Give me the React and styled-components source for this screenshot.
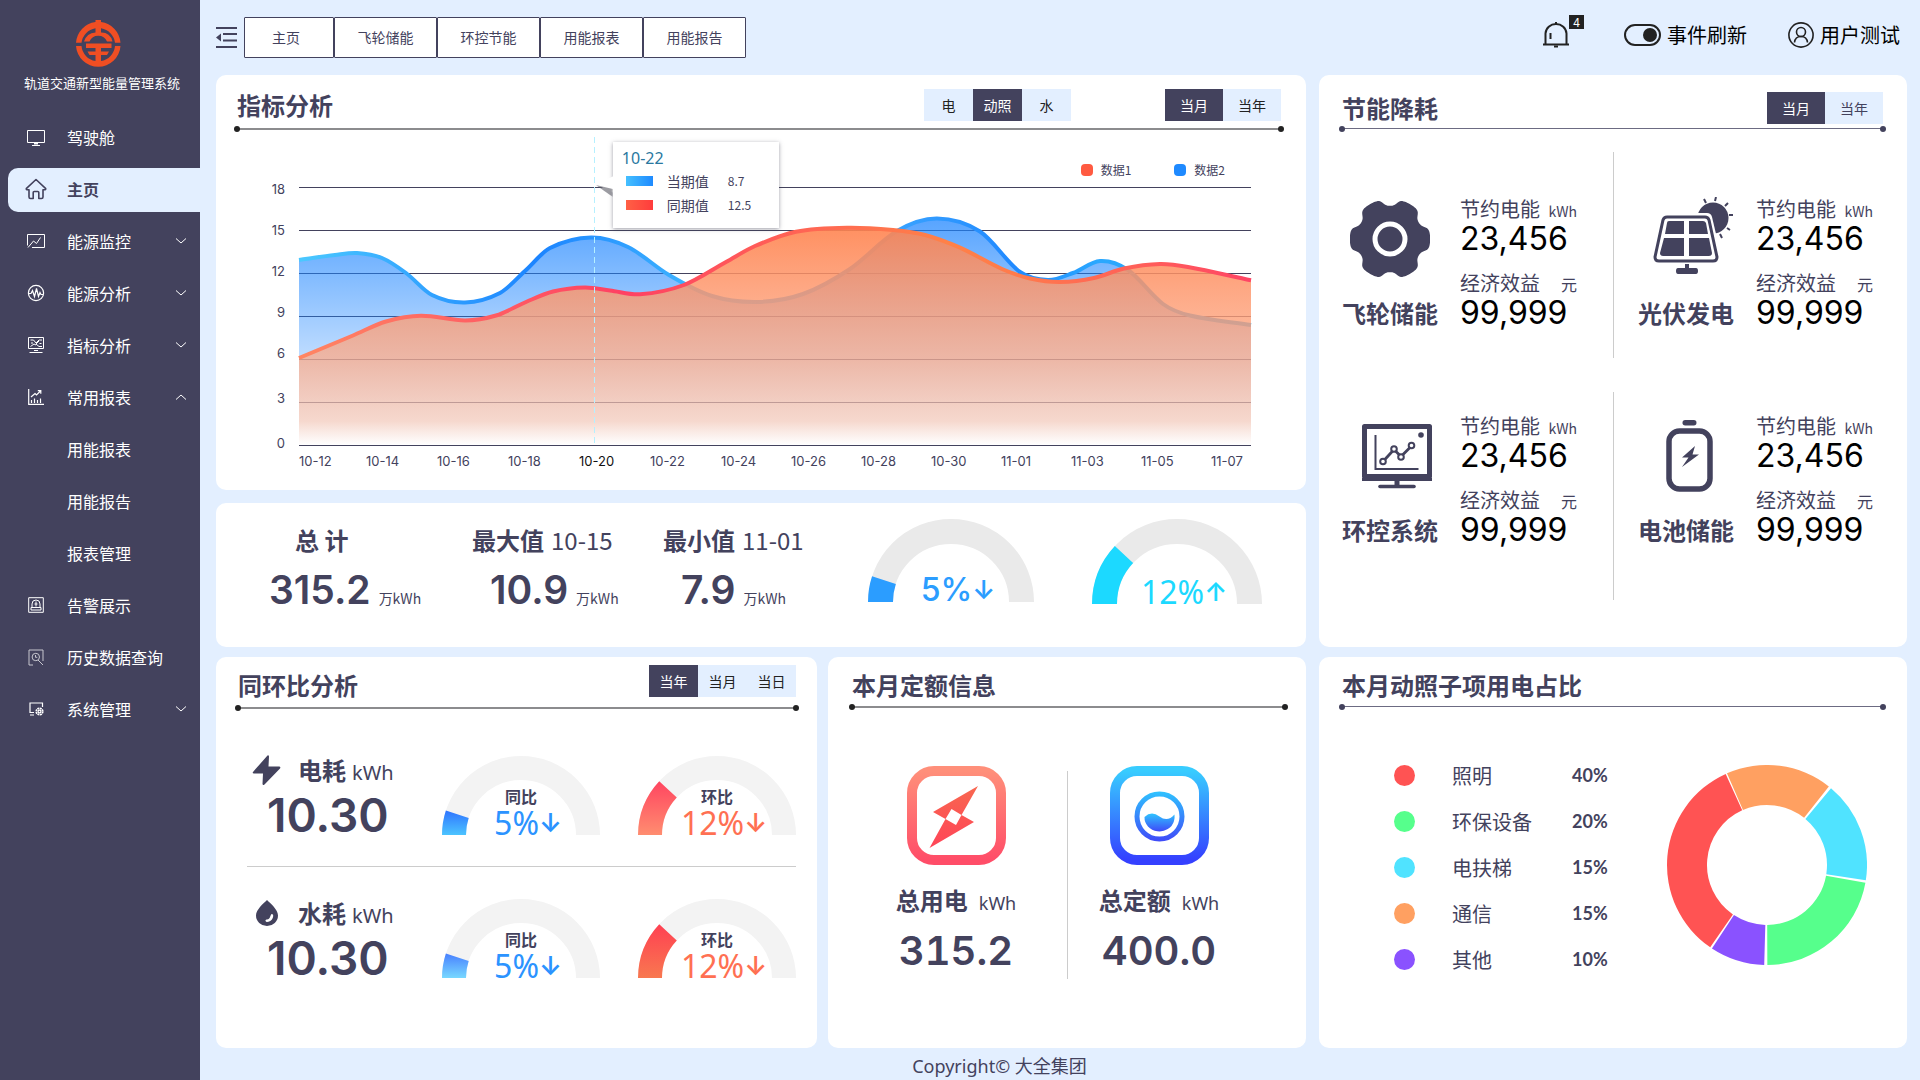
import React from "react";
import styled, { createGlobalStyle, css } from "styled-components";

const ink = "#43425d";
const sky = "#e3efff";
const cjk = '"Noto Sans CJK SC", sans-serif';
const digits = 'Inter, "Noto Sans CJK SC", sans-serif';
const latin = '"Noto Sans", "Noto Sans CJK SC", sans-serif';

const GlobalStyle = createGlobalStyle`
  *, *::before, *::after { box-sizing: border-box; }
  body { margin: 0; background: ${sky}; color: ${ink}; font-family: ${cjk}; font-size: 16px; }
  h1, h2, h3, p, ul, dl, dd, dt { margin: 0; padding: 0; font-weight: inherit; font-size: inherit; }
  ul { list-style: none; }
  a { color: inherit; text-decoration: none; }
  button { font: inherit; color: inherit; border: 0; background: none; padding: 0; cursor: pointer; }
  small { line-height: 16px; }
  svg { display: block; flex: none; }
`;

/* ---------- shell ---------- */

const Shell = styled.div`
  display: grid;
  grid-template-columns: 200px minmax(0, 1fr);
  min-height: 100vh;
`;

const Sidebar = styled.aside`
  background: ${ink};
  color: #fff;
  padding-top: 20px;
`;

const Brand = styled.div`
  display: flex;
  flex-direction: column;
  align-items: center;
  gap: 6px;
  padding-right: 4px;
  margin-bottom: 23px;
`;

const BrandName = styled.h1`
  font-size: 13px;
  line-height: 20px;
  padding-left: 8px;
`;

const Menu = styled.ul`
  display: flex;
  flex-direction: column;
  gap: 8px;
`;

const SubMenu = styled(Menu)`
  margin-top: 8px;
`;

const itemStyle = css`
  display: flex;
  align-items: center;
  gap: 20px;
  width: calc(100% - 8px);
  height: 44px;
  margin-left: 8px;
  padding: 0 13px 2px 17px;
  border-radius: 10px 0 0 10px;
  font-size: 16px;
  text-align: left;
`;

const MenuLink = styled.a`
  ${itemStyle}
  ${(p) => p.$active && css`
    background: ${sky};
    color: ${ink};
    font-weight: 700;
  `}
`;

const MenuToggle = styled.button`
  && {
    ${itemStyle}
  }
`;

const MenuIcon = styled.span`
  display: flex;
  justify-content: center;
  width: 22px;
  flex: none;
`;

const MenuText = styled.span`
  flex: 1;
`;

const Main = styled.main`
  display: flex;
  flex-direction: column;
  min-height: 100vh;
  padding: 0 13px 0 16px;
`;

const TopBar = styled.header`
  display: flex;
  align-items: center;
  height: 75px;
  gap: 7px;
`;

const Tabs = styled.nav`
  display: flex;
`;

const Tab = styled.a`
  display: flex;
  align-items: center;
  justify-content: center;
  height: 41px;
  width: 103px;
  padding-bottom: 2px;
  background: #fff;
  border: 1px solid ${ink};
  border-radius: 1px;
  font-size: 14px;
  &:first-child { width: 90px; padding-right: 6px; }
`;

const Tools = styled.div`
  display: flex;
  align-items: center;
  gap: 41px;
  margin-left: auto;
  padding: 0 7px 6px 0;
  color: #000;
  font-size: 20px;
`;

const Bell = styled.button`
  position: relative;
  margin-right: 14px;
`;

const Badge = styled.span`
  position: absolute;
  left: 26px;
  top: -6px;
  width: 15px;
  height: 14px;
  background: #222;
  color: #fff;
  font-size: 12px;
  line-height: 14px;
  text-align: center;
`;

const SwitchLabel = styled.label`
  display: flex;
  align-items: center;
  gap: 6px;
  cursor: pointer;
`;

const Switch = styled.input`
  appearance: none;
  display: flex;
  align-items: center;
  width: 37px;
  height: 22px;
  margin: 0;
  padding: 0 2px;
  border: 2px solid #222;
  border-radius: 11px;
  &::after {
    content: "";
    width: 14px;
    height: 14px;
    border-radius: 50%;
    background: #222;
  }
  &:checked::after { margin-left: auto; }
`;

const UserButton = styled.button`
  display: flex;
  align-items: center;
  gap: 6px;
`;

/* ---------- cards ---------- */

const TopGrid = styled.div`
  display: grid;
  grid-template-columns: minmax(0, 1090fr) minmax(0, 588fr);
  gap: 13px;
`;

const BottomGrid = styled.div`
  display: grid;
  grid-template-columns: minmax(0, 1090fr) minmax(0, 588fr);
  gap: 13px;
  flex: 1;
  margin-top: 10px;
`;

const LeftStack = styled.div`
  display: flex;
  flex-direction: column;
  gap: 13px;
`;

const LeftPair = styled.div`
  display: grid;
  grid-template-columns: minmax(0, 601fr) minmax(0, 478fr);
  gap: 11px;
`;

const Card = styled.section`
  background: #fff;
  border-radius: 10px;
  padding: 0 24px 0 23px;
`;

const ChartCard = styled(Card)`
  padding: 0 25px 0 21px;
`;

const CardHead = styled.div`
  display: flex;
  align-items: flex-end;
  gap: 94px;
  height: ${(p) => p.$height}px;
  padding-bottom: ${(p) => p.$lift}px;
`;

const CardTitle = styled.h2`
  flex: 1;
  font-size: 24px;
  font-weight: 700;
  line-height: 36px;
`;

const Rule = styled.div`
  position: relative;
  height: ${(p) => (p.$soft ? 1 : 2)}px;
  background: ${(p) => (p.$soft ? "#6c6b82" : "#8c8c8e")};
  &::before, &::after {
    content: "";
    position: absolute;
    top: -2px;
    width: 6px;
    height: 6px;
    border-radius: 50%;
    background: ${(p) => (p.$soft ? ink : "#222")};
  }
  &::before { left: -3px; }
  &::after { right: -3px; }
`;

const Segments = styled.div`
  display: flex;
  margin-bottom: ${(p) => (p.$raised ? 6 : 2)}px;
  background: ${sky};
  color: ${(p) => (p.$muted ? ink : "#222")};
`;

const Segment = styled.button`
  width: ${(p) => (p.$wide ? 58 : 49)}px;
  height: 32px;
  font-size: 14px;
  ${(p) => p.$on && css`
    background: ${ink};
    color: #fff;
  `}
`;

/* ---------- trend chart ---------- */

const Plot = styled.div`
  position: relative;
  display: grid;
  padding-bottom: 8px;
  > svg { grid-area: 1 / 1; width: 100%; height: auto; }
`;

const Legend = styled.ul`
  grid-area: 1 / 1;
  justify-self: end;
  align-self: start;
  display: flex;
  gap: 43px;
  margin: 30px 56px 0 0;
  font-size: 12px;
  line-height: 20px;
  z-index: 1;
`;

const LegendItem = styled.li`
  display: flex;
  align-items: center;
  gap: 8px;
  &::before {
    content: "";
    width: 12px;
    height: 12px;
    border-radius: 4px;
    background: ${(p) => p.$color};
  }
`;

const Tip = styled.div`
  position: absolute;
  left: 36%;
  top: 12px;
  width: 166px;
  height: 86px;
  padding: 5px 9px;
  background: #fff;
  box-shadow: 0 1px 4px rgba(60, 60, 80, 0.5);
  &::before {
    content: "";
    position: absolute;
    left: -17px;
    top: 34px;
    width: 18px;
    height: 17px;
    background: #fff;
    clip-path: polygon(0 50%, 100% 0, 100% 100%);
  }
`;

const TipShade = styled.span`
  position: absolute;
  left: -17px;
  top: 35px;
  width: 17px;
  height: 20px;
  background: rgba(90, 90, 100, 0.6);
  filter: blur(1px);
  clip-path: polygon(0 40%, 100% 60%, 100% 100%);
`;

const TipTitle = styled.p`
  font-family: ${latin};
  font-size: 16px;
  line-height: 22px;
  color: #2a78a0;
`;

const TipRow = styled.p`
  display: grid;
  grid-template-columns: 27px 42px auto;
  column-gap: 14px;
  align-items: center;
  padding-left: 4px;
  font-size: 14px;
  line-height: 24px;
  > small { font-size: 12px; padding-left: 5px; }
`;

const Swatch = styled.span`
  height: 10px;
  background: linear-gradient(90deg, ${(p) => p.$from}, ${(p) => p.$to});
`;

/* ---------- stats ---------- */

const StatsCard = styled(Card)`
  display: grid;
  grid-template-columns: 203fr 191fr 205fr 224fr 170fr;
  padding: 16px 44px 29px 53px;
`;

const StatHead = styled.h3`
  display: flex;
  gap: 7px;
  padding-left: ${(p) => p.$inset}px;
  margin: 3px 0 4px;
  font-size: 24px;
  line-height: 36px;
  font-weight: 400;
  > b { font-weight: 700; }
`;

const StatValue = styled.p`
  display: flex;
  align-items: baseline;
  gap: 8px;
  padding-left: ${(p) => p.$inset}px;
  font-family: ${digits};
  font-size: 39px;
  font-weight: 600;
  line-height: 56px;
  > small { font-family: ${cjk}; font-size: 14px; font-weight: 400; }
`;

const GaugeBox = styled.div`
  display: grid;
  justify-content: start;
  align-items: end;
  align-self: ${(p) => p.$align || "center"};
  > svg { grid-area: 1 / 1; }
`;

const GaugeText = styled.div`
  grid-area: 1 / 1;
  display: flex;
  flex-direction: column;
  align-items: center;
  gap: 5px;
  > b { font-size: 16px; font-weight: 700; line-height: 20px; }
`;

const Percent = styled.span`
  display: flex;
  padding-left: 14px;
  font-family: ${(p) => (p.$strong ? digits : latin)};
  font-size: 32px;
  font-weight: ${(p) => (p.$strong ? 500 : 400)};
  line-height: 24px;
  color: ${(p) => p.$color};
  > i { font-family: ${digits}; font-style: normal; font-size: 26px; font-weight: 600; }
`;

/* ---------- savings ---------- */

const SavingGrid = styled.div`
  display: grid;
  grid-template-columns: 271fr 270fr;
  grid-template-rows: 206px 208px;
  row-gap: 34px;
  padding: 23px 0 46px;
`;

const Saving = styled.article`
  display: grid;
  grid-template-columns: 96px minmax(0, 1fr);
  column-gap: 22px;
  align-content: start;
  padding-top: ${(p) => p.$top}px;
  &:nth-child(even) { border-left: 1px solid #ccc; padding-left: 24px; }
`;

const SavingName = styled.div`
  display: flex;
  flex-direction: column;
  align-items: center;
  justify-content: space-between;
  > h3 { font-size: 24px; font-weight: 700; line-height: 36px; white-space: nowrap; }
`;

const IconBox = styled.div`
  display: flex;
  align-items: center;
  justify-content: center;
  height: 84px;
`;

const Metrics = styled.dl`
  width: 117px;
`;

const MetricLabel = styled.dt`
  display: flex;
  justify-content: space-between;
  align-items: baseline;
  font-size: 20px;
  line-height: 24px;
  > small { font-size: ${(p) => (p.$big ? 16 : 14)}px; }
`;

const MetricValue = styled.dd`
  margin-bottom: 14px;
  font-family: ${digits};
  font-size: 32px;
  line-height: 36px;
  color: #000;
  &:last-child { margin-bottom: 0; }
`;

/* ---------- comparison ---------- */

const CompareCard = styled(Card)`
  padding: 0 21px 0 22px;
`;

const CompareList = styled.div`
  padding: 15px 0 0 9px;
`;

const CompareRow = styled.div`
  display: grid;
  grid-template-columns: minmax(0, 1fr) 158px 158px;
  column-gap: 38px;
  align-items: center;
  padding: 28px 0 27px;
  & + & { border-top: 1px solid #ccc; }
`;

const UsageHead = styled.h3`
  display: flex;
  align-items: baseline;
  gap: 6px;
  font-size: 24px;
  font-weight: 700;
  line-height: 36px;
  white-space: nowrap;
  > svg { align-self: center; margin: 0 10px 0 4px; }
  > small { font-family: ${latin}; font-size: 20px; font-weight: 400; }
`;

const UsageValue = styled.p`
  margin-top: 3px;
  padding-left: 20px;
  font-family: ${digits};
  font-size: 46px;
  font-weight: 600;
  line-height: 48px;
`;

/* ---------- quota ---------- */

const QuotaCard = styled(Card)`
  padding: 0 21px 0 24px;
`;

const QuotaRow = styled.div`
  display: flex;
  padding: 58px 0 0 44px;
`;

const Quota = styled.div`
  display: flex;
  flex-direction: column;
  align-items: center;
  width: 120px;
`;

const Divider = styled.span`
  width: 1px;
  height: 208px;
  margin: 5px 31px 0 51px;
  background: #ccc;
`;

const QuotaName = styled.h3`
  display: flex;
  align-items: baseline;
  gap: 11px;
  margin: 17px 0 9px;
  font-size: 24px;
  font-weight: 700;
  line-height: 36px;
  white-space: nowrap;
  > small { font-family: ${latin}; font-size: 18px; font-weight: 400; }
`;

const QuotaValue = styled.p`
  font-family: ${digits};
  font-size: 40px;
  font-weight: 600;
  font-variant-numeric: tabular-nums;
  line-height: 48px;
`;

/* ---------- share ---------- */

const ShareRow = styled.div`
  display: flex;
  padding: 45px 16px 0 52px;
  justify-content: space-between;
`;

const ShareItem = styled.li`
  display: grid;
  grid-template-columns: 58px 120px auto;
  align-items: center;
  height: 46px;
  font-size: 20px;
  &::before {
    content: "";
    width: 21px;
    height: 21px;
    border-radius: 50%;
    background: ${(p) => p.$color};
  }
  > b { font-family: Lato, sans-serif; font-size: 18px; }
`;

const DonutBox = styled.div`
  padding-top: 13px;
`;

const Footer = styled.footer`
  height: 32px;
  padding-right: 124px;
  padding-top: 5px;
  font-family: ${latin};
  font-size: 18px;
  line-height: 26px;
  text-align: center;
`;

/* ---------- drawings ---------- */

const Logo = () => (
  <svg width="45" height="47" viewBox="0 0 45 47" fill="#f04e23">
    <path d="M19.500 2V0h5.500v2A22.300 22.300 0 0 1 44.500 22.800H39A16.800 16.800 0 0 0 25 8.300V12.500a11 11 0 0 1 11.500 9H31a9.500 9.500 0 0 0-17.500 0H8A13 13 0 0 1 19.500 12.500V8.300A16.800 16.800 0 0 0 5.500 22.800H0A22.300 22.300 0 0 1 19.500 2Z" />
    <path d="M0 26H5.500A16.800 16.800 0 0 0 19.500 41V35H13.500L11.500 31.500H19.500V28H10V23.500H35.500V28H25V31.500H33L31 35H25V41A16.800 16.800 0 0 0 39 26H44.500A22.300 22.300 0 0 1 0 26Z" />
  </svg>
);

const line = { fill: "none", stroke: "currentColor", strokeWidth: 1.2 };
const thin = { fill: "none", stroke: "currentColor", strokeWidth: 1 };

const ScreenIcon = () => (
  <svg width="18" height="18" viewBox="0 0 18 18" {...thin}>
    <path d="M.5 2.500h17v12H.5zM7 15.500h4M5 17.500h8M8 15v2M10 15v2" />
  </svg>
);
const HomeIcon = () => (
  <svg width="22" height="22" viewBox="0 0 22 22" fill="none" stroke="currentColor" strokeWidth="1.600" strokeLinejoin="round" strokeLinecap="round">
    <path d="M11 1.500 1.500 10.300c-.5.600-.2 1.400.5 1.400H4V19c0 1 .5 1.500 1.500 1.500h2.700v-6c0-.6.400-1 1-1h3.600c.6 0 1 .4 1 1v6h2.700c1 0 1.500-.5 1.500-1.500v-7.300h2c.7 0 1-.8.500-1.400z" />
  </svg>
);
const TrendIcon = () => (
  <svg width="18" height="16" viewBox="0 0 18 16" {...thin}>
    <path d="M.5 12.500V1.500h17v13H5M1 14.500l5.500-6.500 3 2.500 4-6" />
  </svg>
);
const PulseIcon = () => (
  <svg width="18" height="18" viewBox="0 0 18 18" {...line}>
    <circle cx="9" cy="9" r="7.600" />
    <path d="M2 9.500h2l1.500-3 2 6 2-8 2 8 1.500-4 1 2h2" />
  </svg>
);
const BoardIcon = () => (
  <svg width="18" height="18" viewBox="0 0 18 18" {...thin}>
    <path d="M1.500 1.500h15v11h-15zM3.500 4h3l2.500 3 3-3h3M3.500 10.500 7 8l2 1M12 5l-3 3 3 2.500h3M4 7h2M12.500 7.500h2M7 14.500h4M2.500 16.500h13" />
  </svg>
);
const BarsIcon = () => (
  <svg width="16" height="16" viewBox="0 0 16 16" {...line}>
    <path d="M.7 0v15.300H16M3 8l4-3.500 1.500 1.500L12.500 2M9.800 1.700h3v3M3.500 14v-3M6.500 14V9.500M9.500 14v-3M12.500 14V9.500" />
  </svg>
);
const AlarmIcon = () => (
  <svg width="16" height="16" viewBox="0 0 16 16" {...thin}>
    <path d="M.7.7h14.600v14.600H.7zM4 10.500V7a4 4 0 0 1 8 0v3.500M3 10.500h10v2.500H3zM8 4.500v5M6.500 7h3" />
  </svg>
);
const SearchIcon = () => (
  <svg width="16" height="17" viewBox="0 0 16 17" {...thin} opacity="0.7">
    <path d="M5 16H1V1h14v11M10 11l5 5" />
    <circle cx="7.800" cy="8" r="3.700" />
    <path d="M7.500 6v2.300h1.800" />
  </svg>
);
const SystemIcon = () => (
  <svg width="15" height="14" viewBox="0 0 15 14" {...line}>
    <path d="M5 10.500H1V1h12.500v4M1 13h4" />
    <circle cx="10.500" cy="9.500" r="3.200" strokeWidth="1.800" strokeDasharray="1.900 .6" />
    <circle cx="10.500" cy="9.500" r="1.400" />
  </svg>
);
const Chevron = ({ up }) => (
  <svg width="12" height="8" viewBox="0 0 12 8" {...thin}>
    <path d={up ? "M1 6.500 6 2l5 4.500" : "M1 1.500 6 6l5-4.500"} />
  </svg>
);

const CollapseIcon = () => (
  <svg width="21" height="21" viewBox="0 0 21 21" fill={ink}>
    <path d="M0 0h21v2H0zM7 6h14v2H7zM7 12.500h14v2H7zM0 19h21v2H0zM0 10.500 5 6.500v8z" />
  </svg>
);
const BellIcon = () => (
  <svg width="26" height="27" viewBox="0 0 26 27" fill="none" stroke="#222" strokeWidth="2">
    <path d="M2.500 23V12.500A10.500 10 0 0 1 13 3a10.500 10 0 0 1 10.500 9.500V23M0 23.500h26M13 1v2M7.500 12v6" />
    <path d="M11 25.500h4" />
  </svg>
);
const UserIcon = () => (
  <svg width="26" height="26" viewBox="0 0 26 26" fill="none" stroke="#222" strokeWidth="1.600">
    <circle cx="13" cy="13" r="12.100" />
    <circle cx="13" cy="10" r="4.500" />
    <path d="M6.500 20.500c.4-4 3-6 6.500-6s6.100 2 6.500 6" />
  </svg>
);

/* six broad lobes with narrow notches between them */
const gearPath = (() => {
  const pts = [];
  for (let i = 0; i < 180; i++) {
    const a = (i / 180) * Math.PI * 2;
    const r = 36.3 + 3.9 * Math.tanh(2 * (Math.cos(6 * a) + 0.45));
    pts.push(`${(40 + r * Math.cos(a)).toFixed(2)},${(40 + r * Math.sin(a)).toFixed(2)}`);
  }
  return `M${pts.join("L")}Z`;
})();

const GearIcon = () => (
  <svg width="80" height="80" viewBox="0 0 80 80">
    <path d={gearPath} fill={ink} />
    <circle cx="40" cy="40" r="15" fill={ink} stroke="#fff" strokeWidth="5" />
  </svg>
);
const SolarIcon = () => (
  <svg width="96" height="84" viewBox="-16 0 96 84" fill={ink}>
    <circle cx="59" cy="21" r="15.500" />
    <path d="M50 2l2 4M62 0l-1 4M74 6l-3 3M79 18h-4M73 31l3 2M66 37l2 4" stroke={ink} strokeWidth="2" fill="none" />
    <path d="M12 16H52q4 0 5 4l9 38q1 8-6 8H3q-6 0-5-6L7 20q1-4 5-4Z" fill="#fff" transform="translate(1)" />
    <path d="M13 20H51q3 0 4 3L63 60q0 4-4 4H5q-4 0-4-4L9 23q1-3 4-3Z" fill="#fff" stroke={ink} strokeWidth="3" />
    <path d="M15 24H30V37H11L13 26q0-2 2-2ZM35 24H49q2 0 3 2l2 11H35ZM10 41H30V59H9q-3 0-3-3ZM35 41H55l3 15q0 3-3 3H35Z" strokeLinejoin="round" />
    <path d="M31 67h4v4h7q2 0 2 3t-2 3H24q-2 0-2-3t2-3h7z" />
  </svg>
);
const MonitorIcon = () => (
  <svg width="84" height="66" viewBox="-14 0 84 66" fill="none" stroke={ink}>
    <path d="M2.500 3.500h65v50h-65z" strokeWidth="5" strokeLinejoin="round" />
    <path d="M0 56.500h70" strokeWidth="3" />
    <path d="M35 57v6" strokeWidth="5" />
    <path d="M18 63.500h34" strokeWidth="3.600" strokeLinecap="round" />
    <path d="M13.500 12v34h43" strokeWidth="2" />
    <path d="M21 38.500 32 26.500l7 7L49.500 23" strokeWidth="2.800" />
    <g fill="#fff" strokeWidth="2">
      <circle cx="21" cy="38.500" r="2.800" />
      <circle cx="32" cy="26" r="2.800" />
      <circle cx="39" cy="34" r="2.800" />
      <circle cx="49.500" cy="22.500" r="2.800" />
    </g>
    <circle cx="59" cy="12" r="2.800" fill={ink} stroke="none" />
  </svg>
);
const BatteryIcon = () => (
  <svg width="53" height="72" viewBox="-6 0 53 72">
    <rect x="16.500" y="0" width="14" height="5.500" rx="2.700" fill={ink} />
    <rect x="3" y="11" width="41" height="58" rx="10.500" fill="none" stroke={ink} strokeWidth="5.500" />
    <path d="M29 26 16 37.500h6.500L16 47 33 34.500h-6.500z" fill={ink} />
  </svg>
);
const BoltIcon = () => (
  <svg width="31" height="30" viewBox="0 0 31 30" fill={ink}>
    <path d="M16.500.5 2 17q-1 1.500 1 1.500h9L11.500 29q.6 1.800 2 .5L29 13.500q1-1.500-.6-2H17.500L18 1.500q-.3-1.600-1.500-1Z" />
  </svg>
);
const DropIcon = () => (
  <svg width="31" height="28" viewBox="0 0 31 28">
    <path d="M16 1C12.500 4.500 5 10.500 5 16.500a11 10.500 0 0 0 22 0C27 10.500 19.500 4.500 16 1Z" fill={ink} />
    <path d="M22 15.500c1 3-1.800 7.500-6 7.500-2.500-1-1.500-2.500 0-2.600 3.500-.2 3-4 4.500-5.400Z" fill="#fff" />
  </svg>
);

const PowerBadge = () => (
  <svg width="99" height="99" viewBox="0 0 99 99">
    <defs>
      <linearGradient id="pw" x1="0" y1="0" x2="0" y2="1"><stop stopColor="#ff8f7a" /><stop offset="1" stopColor="#ff4d68" /></linearGradient>
      <linearGradient id="pi" x1="0" y1="0" x2="0" y2="1"><stop stopColor="#f8674f" /><stop offset="1" stopColor="#ff4558" /></linearGradient>
    </defs>
    <rect x="5" y="5" width="89" height="89" rx="22" fill="none" stroke="url(#pw)" strokeWidth="10" />
    <path d="M71 20 54.500 49 44.500 43 38.500 53 26 46ZM54.500 49 67 56 22.500 82 38.500 53 49 59Z" fill="url(#pi)" />
  </svg>
);
const WaterBadge = () => (
  <svg width="99" height="99" viewBox="0 0 99 99">
    <defs>
      <linearGradient id="wt" x1="0" y1="0" x2="0" y2="1"><stop stopColor="#38ccff" /><stop offset="1" stopColor="#3540ff" /></linearGradient>
      <linearGradient id="wi" gradientUnits="userSpaceOnUse" x1="0" y1="25" x2="0" y2="76"><stop stopColor="#2fc4ff" /><stop offset="1" stopColor="#3f49f8" /></linearGradient>
      <linearGradient id="ww" x1="0" y1="0" x2="0" y2="1"><stop stopColor="#2fc4ff" /><stop offset="1" stopColor="#3f49f8" /></linearGradient>
    </defs>
    <rect x="5" y="5" width="89" height="89" rx="22" fill="none" stroke="url(#wt)" strokeWidth="10" />
    <circle cx="49.500" cy="50.500" r="22.500" fill="none" stroke="url(#wi)" strokeWidth="5" />
    <path d="M34.500 51q7-6.500 15-.5T64.500 48.500a15 16 0 0 1-.5 6.500A15 14 0 0 1 34.500 51Z" fill="url(#ww)" />
  </svg>
);

/* smooth path through a list of points */
const smooth = (pts) => {
  let d = `M${pts[0][0]} ${pts[0][1]}`;
  for (let i = 0; i < pts.length - 1; i++) {
    const p0 = pts[i - 1] || pts[i];
    const p1 = pts[i];
    const p2 = pts[i + 1];
    const p3 = pts[i + 2] || p2;
    const h = p2[0] - p1[0];
    const m1 = (p2[1] - p0[1]) / (p2[0] - p0[0]);
    const m2 = (p3[1] - p1[1]) / (p3[0] - p1[0]);
    d += `C${(p1[0] + h / 3).toFixed(1)} ${(p1[1] + (m1 * h) / 3).toFixed(1)} ${(p2[0] - h / 3).toFixed(1)} ${(p2[1] - (m2 * h) / 3).toFixed(1)} ${p2[0]} ${p2[1]}`;
  }
  return d;
};

const blueLine = smooth([
  [299, 260], [335, 255], [357, 253], [382, 258], [406, 273], [432, 295], [465, 302.5], [500, 293], [525, 271], [550, 248],
  [591, 237.5], [628, 247], [669, 275], [712, 296], [757, 302], [803, 294], [850, 269], [897, 231], [937, 218.5], [980, 231.5],
  [1020, 272], [1048, 280], [1073, 273], [1100, 261], [1128, 270], [1163, 304], [1190, 315.500], [1251, 325],
]);
const redLine = smooth([
  [299, 358], [353, 335.500], [386, 321.500], [421, 315.700], [465, 320.500], [496, 315.500], [526, 302], [553, 291.500], [585, 287.500],
  [610, 290.500], [640, 294.300], [684, 285], [726, 262], [755, 246], [796, 231.700], [847, 227.700], [893, 230], [925, 235], [960, 247.700], [1002, 269],
  [1030, 278.500], [1060, 282], [1094, 278], [1124, 268.500], [1160, 264], [1188, 267], [1251, 280.300],
]);
const floor = "V445H299Z";
const levels = [
  ["18", 187.5, 189], ["15", 230.5, 230], ["12", 273.5, 271], ["9", 316.5, 312], ["6", 359.5, 353], ["3", 402.5, 398], ["0", 445.5, 443],
];
const days = [
  ["10-12", 299], ["10-14", 366], ["10-16", 437], ["10-18", 508], ["10-20", 579], ["10-22", 650], ["10-24", 721],
  ["10-26", 791], ["10-28", 861], ["10-30", 931], ["11-01", 1001], ["11-03", 1071], ["11-05", 1141], ["11-07", 1211],
];

const TrendChart = () => (
  <svg viewBox="237 130 1044 352" fontFamily={digits} fontSize="13" fill={ink} role="img" aria-label="指标分析">
    <defs>
      <linearGradient id="bs" gradientUnits="userSpaceOnUse" x1="299" y1="0" x2="1251" y2="0">
        <stop stopColor="#4bc8ff" /><stop offset=".25" stopColor="#1c84ff" /><stop offset=".4" stopColor="#3bb0ff" />
        <stop offset=".62" stopColor="#3aa4ff" /><stop offset=".75" stopColor="#2089ff" /><stop offset=".84" stopColor="#2aa8ff" /><stop offset="1" stopColor="#2aa0e8" />
      </linearGradient>
      <linearGradient id="rs" gradientUnits="userSpaceOnUse" x1="299" y1="0" x2="1251" y2="0">
        <stop stopColor="#ff8663" /><stop offset=".34" stopColor="#ff4163" /><stop offset=".68" stopColor="#ff8148" />
        <stop offset=".76" stopColor="#ff7a4c" /><stop offset="1" stopColor="#ff4565" />
      </linearGradient>
      <linearGradient id="bf" gradientUnits="userSpaceOnUse" x1="0" y1="218" x2="0" y2="445">
        <stop stopColor="#1c84ff" stopOpacity=".74" /><stop offset=".62" stopColor="#1c84ff" stopOpacity=".28" /><stop offset=".9" stopColor="#1c84ff" stopOpacity=".06" /><stop offset="1" stopColor="#1c84ff" stopOpacity="0" />
      </linearGradient>
      <linearGradient id="rf" gradientUnits="userSpaceOnUse" x1="0" y1="228" x2="0" y2="445">
        <stop stopColor="#ff8450" stopOpacity=".9" /><stop offset=".6" stopColor="#fcaa88" stopOpacity=".75" /><stop offset=".89" stopColor="#f9c8b4" stopOpacity=".66" /><stop offset="1" stopColor="#fff" stopOpacity=".6" />
      </linearGradient>
    </defs>
    {levels.map(([label, y, ty]) => (
      <g key={label}>
        <path d={`M299 ${y}H1251`} stroke={ink} />
        <text x="285" y={ty + 5} textAnchor="end">{label}</text>
      </g>
    ))}
    <path d={blueLine + floor} fill="url(#bf)" />
    <path d={blueLine} fill="none" stroke="url(#bs)" strokeWidth="4" />
    <path d={redLine + floor} fill="url(#rf)" />
    <path d={redLine} fill="none" stroke="url(#rs)" strokeWidth="4" />
    <path d="M594.500 137V446" stroke="#b5f0ff" strokeDasharray="6 4" />
    {days.map(([label, x]) => (
      <text key={label} x={x} y="466" fill={label === "10-20" ? "#111" : ink}>{label}</text>
    ))}
  </svg>
);

const Gauge = ({ id, r, thickness, degrees, track, from, to, align, label, color, value, arrow, strong }) => {
  const m = r - thickness / 2;
  const a = (degrees * Math.PI) / 180;
  const x = (r - m * Math.cos(a)).toFixed(2);
  const y = (r - m * Math.sin(a)).toFixed(2);
  return (
    <GaugeBox $align={align}>
      <svg width={r * 2} height={r} viewBox={`0 0 ${r * 2} ${r}`} fill="none" strokeWidth={thickness}>
        <defs>
          <linearGradient id={id} gradientUnits="userSpaceOnUse" x1="0" y1={r - r * Math.sin(a)} x2="0" y2={r}>
            <stop stopColor={from} /><stop offset="1" stopColor={to} />
          </linearGradient>
        </defs>
        <path d={`M${r - m} ${r}A${m} ${m} 0 0 1 ${r + m} ${r}`} stroke={track} />
        <path d={`M${r - m} ${r}A${m} ${m} 0 0 1 ${x} ${y}`} stroke={`url(#${id})`} />
      </svg>
      <GaugeText>
        {label && <b>{label}</b>}
        <Percent $color={color} $strong={strong}>{value}<i>{arrow}</i></Percent>
      </GaugeText>
    </GaugeBox>
  );
};

const polar = (r, deg) => {
  const a = (deg * Math.PI) / 180;
  return `${(100 + r * Math.sin(a)).toFixed(2)} ${(100 - r * Math.cos(a)).toFixed(2)}`;
};
const slices = [
  [-23.6, 38.2, "#ffa061"], [39.8, 98.8, "#50e3ff"], [100.2, 179.8, "#56ff8c"], [181.6, 213.4, "#8a52ff"], [214.6, 335.6, "#ff5353"],
];
const Donut = () => (
  <svg width="200" height="200" viewBox="0 0 200 200" role="img" aria-label="用电占比">
    {slices.map(([s, e, c]) => (
      <path key={c} fill={c} d={`M${polar(100, s)}A100 100 0 0 1 ${polar(100, e)}L${polar(60, e)}A60 60 0 0 0 ${polar(60, s)}Z`} />
    ))}
  </svg>
);

/* ---------- content ---------- */

const menu = [
  { text: "驾驶舱", icon: <ScreenIcon /> },
  { text: "主页", icon: <HomeIcon />, active: true },
  { text: "能源监控", icon: <TrendIcon />, fold: true },
  { text: "能源分析", icon: <PulseIcon />, fold: true },
  { text: "指标分析", icon: <BoardIcon />, fold: true },
  { text: "常用报表", icon: <BarsIcon />, fold: true, children: ["用能报表", "用能报告", "报表管理"] },
  { text: "告警展示", icon: <AlarmIcon /> },
  { text: "历史数据查询", icon: <SearchIcon /> },
  { text: "系统管理", icon: <SystemIcon />, fold: true },
];

const savings = [
  { name: "飞轮储能", icon: <GearIcon />, top: 45 },
  { name: "光伏发电", icon: <SolarIcon />, top: 45 },
  { name: "环控系统", icon: <MonitorIcon />, top: 22 },
  { name: "电池储能", icon: <BatteryIcon />, top: 22 },
];

const shares = [
  ["照明", "40%", "#ff5353"], ["环保设备", "20%", "#56ff8c"], ["电扶梯", "15%", "#50e3ff"], ["通信", "15%", "#ffa061"], ["其他", "10%", "#8a52ff"],
];

const Choice = ({ options, on, wide, muted, raised }) => (
  <Segments $muted={muted} $raised={raised}>
    {options.map((o) => (
      <Segment key={o} type="button" $wide={wide} $on={o === on} aria-pressed={o === on}>{o}</Segment>
    ))}
  </Segments>
);

const Stat = ({ title, date, value, headInset, valueInset }) => (
  <div>
    <StatHead $inset={headInset}><b>{title}</b>{date && <span>{date}</span>}</StatHead>
    <StatValue $inset={valueInset}>{value}<small>万kWh</small></StatValue>
  </div>
);

const Usage = ({ id, icon, name, blue, red }) => (
  <CompareRow>
    <div>
      <UsageHead>{icon}{name}<small>kWh</small></UsageHead>
      <UsageValue>10.30</UsageValue>
    </div>
    <Gauge id={`${id}a`} r={79} thickness={24} degrees={18} track="#f3f3f3" from={blue[0]} to={blue[1]} label="同比" color="#2b93ff" value="5%" arrow="↓" />
    <Gauge id={`${id}b`} r={79} thickness={24} degrees={43} track="#f3f3f3" from={red[0]} to={red[1]} label="环比" color="#ff7052" value="12%" arrow="↓" />
  </CompareRow>
);

export default function App() {
  return (
    <Shell>
      <GlobalStyle />
      <Sidebar>
        <Brand>
          <Logo />
          <BrandName>轨道交通新型能量管理系统</BrandName>
        </Brand>
        <nav>
          <Menu>
            {menu.map((m) => (
              <li key={m.text}>
                {m.fold ? (
                  <MenuToggle type="button" aria-expanded={!!m.children}>
                    <MenuIcon>{m.icon}</MenuIcon>
                    <MenuText>{m.text}</MenuText>
                    <Chevron up={!!m.children} />
                  </MenuToggle>
                ) : (
                  <MenuLink href="#" $active={m.active}>
                    <MenuIcon>{m.icon}</MenuIcon>
                    <MenuText>{m.text}</MenuText>
                  </MenuLink>
                )}
                {m.children && (
                  <SubMenu>
                    {m.children.map((c) => (
                      <li key={c}>
                        <MenuLink href="#"><MenuIcon /><MenuText>{c}</MenuText></MenuLink>
                      </li>
                    ))}
                  </SubMenu>
                )}
              </li>
            ))}
          </Menu>
        </nav>
      </Sidebar>

      <Main>
        <TopBar>
          <button type="button" aria-label="收起菜单"><CollapseIcon /></button>
          <Tabs>
            {["主页", "飞轮储能", "环控节能", "用能报表", "用能报告"].map((t) => (
              <Tab key={t} href="#">{t}</Tab>
            ))}
          </Tabs>
          <Tools>
            <Bell type="button" aria-label="通知"><BellIcon /><Badge>4</Badge></Bell>
            <SwitchLabel><Switch type="checkbox" defaultChecked />事件刷新</SwitchLabel>
            <UserButton type="button"><UserIcon />用户测试</UserButton>
          </Tools>
        </TopBar>

        <TopGrid>
          <LeftStack>
            <ChartCard>
              <CardHead $height={53} $lift={5}>
                <CardTitle>指标分析</CardTitle>
                <Choice options={["电", "动照", "水"]} on="动照" />
                <Choice options={["当月", "当年"]} on="当月" wide />
              </CardHead>
              <Rule />
              <Plot>
                <TrendChart />
                <Legend>
                  <LegendItem $color="#ff5a41">数据1</LegendItem>
                  <LegendItem $color="#1e8aff">数据2</LegendItem>
                </Legend>
                <Tip>
                  <TipShade />
                  <TipTitle>10-22</TipTitle>
                  <TipRow><Swatch $from="#45c0ff" $to="#1e8aff" />当期值<small>8.7</small></TipRow>
                  <TipRow><Swatch $from="#ff6045" $to="#ff3c3c" />同期值<small>12.5</small></TipRow>
                </Tip>
              </Plot>
            </ChartCard>
            <StatsCard>
              <Stat title="总 计" value="315.2" headInset={26} valueInset={0} />
              <Stat title="最大值" date="10-15" value="10.9" headInset={0} valueInset={18} />
              <Stat title="最小值" date="11-01" value="7.9" headInset={0} valueInset={18} />
              <Gauge id="g1" r={83} thickness={25} degrees={18} track="#eaeaea" from="#2b9dff" to="#2b9dff" align="start" color="#2b9dff" value="5%" arrow="↓" strong />
              <Gauge id="g2" r={85} thickness={25} degrees={43} track="#eaeaea" from="#1cd9ff" to="#1cd9ff" align="start" color="#1cd9ff" value="12%" arrow="↑" />
            </StatsCard>
          </LeftStack>

          <Card>
            <CardHead $height={53} $lift={2}>
              <CardTitle>节能降耗</CardTitle>
              <Choice options={["当月", "当年"]} on="当月" wide muted />
            </CardHead>
            <Rule $soft />
            <SavingGrid>
              {savings.map((s) => (
                <Saving key={s.name} $top={s.top}>
                  <SavingName>
                    <IconBox>{s.icon}</IconBox>
                    <h3>{s.name}</h3>
                  </SavingName>
                  <Metrics>
                    <MetricLabel>节约电能<small>kWh</small></MetricLabel>
                    <MetricValue>23,456</MetricValue>
                    <MetricLabel $big>经济效益<small>元</small></MetricLabel>
                    <MetricValue>99,999</MetricValue>
                  </Metrics>
                </Saving>
              ))}
            </SavingGrid>
          </Card>
        </TopGrid>

        <BottomGrid>
          <LeftPair>
            <CompareCard>
              <CardHead $height={50} $lift={4}>
                <CardTitle>同环比分析</CardTitle>
                <Choice options={["当年", "当月", "当日"]} on="当年" raised />
              </CardHead>
              <Rule />
              <CompareList>
                <Usage id="e" icon={<BoltIcon />} name="电耗" blue={["#2f74ff", "#4cc4ff"]} red={["#ff4560", "#ff8d70"]} />
                <Usage id="w" icon={<DropIcon />} name="水耗" blue={["#4880ff", "#78d8ff"]} red={["#ff4052", "#f87850"]} />
              </CompareList>
            </CompareCard>
            <QuotaCard>
              <CardHead $height={49} $lift={3}>
                <CardTitle>本月定额信息</CardTitle>
              </CardHead>
              <Rule />
              <QuotaRow>
                <Quota>
                  <PowerBadge />
                  <QuotaName>总用电<small>kWh</small></QuotaName>
                  <QuotaValue>315.2</QuotaValue>
                </Quota>
                <Divider />
                <Quota>
                  <WaterBadge />
                  <QuotaName>总定额<small>kWh</small></QuotaName>
                  <QuotaValue>400.0</QuotaValue>
                </Quota>
              </QuotaRow>
            </QuotaCard>
          </LeftPair>
          <Card>
            <CardHead $height={49} $lift={3}>
              <CardTitle>本月动照子项用电占比</CardTitle>
            </CardHead>
            <Rule $soft />
            <ShareRow>
              <ul>
                {shares.map(([name, pct, color]) => (
                  <ShareItem key={name} $color={color}>{name}<b>{pct}</b></ShareItem>
                ))}
              </ul>
              <DonutBox><Donut /></DonutBox>
            </ShareRow>
          </Card>
        </BottomGrid>
        <Footer>Copyright© 大全集团</Footer>
      </Main>
    </Shell>
  );
}
